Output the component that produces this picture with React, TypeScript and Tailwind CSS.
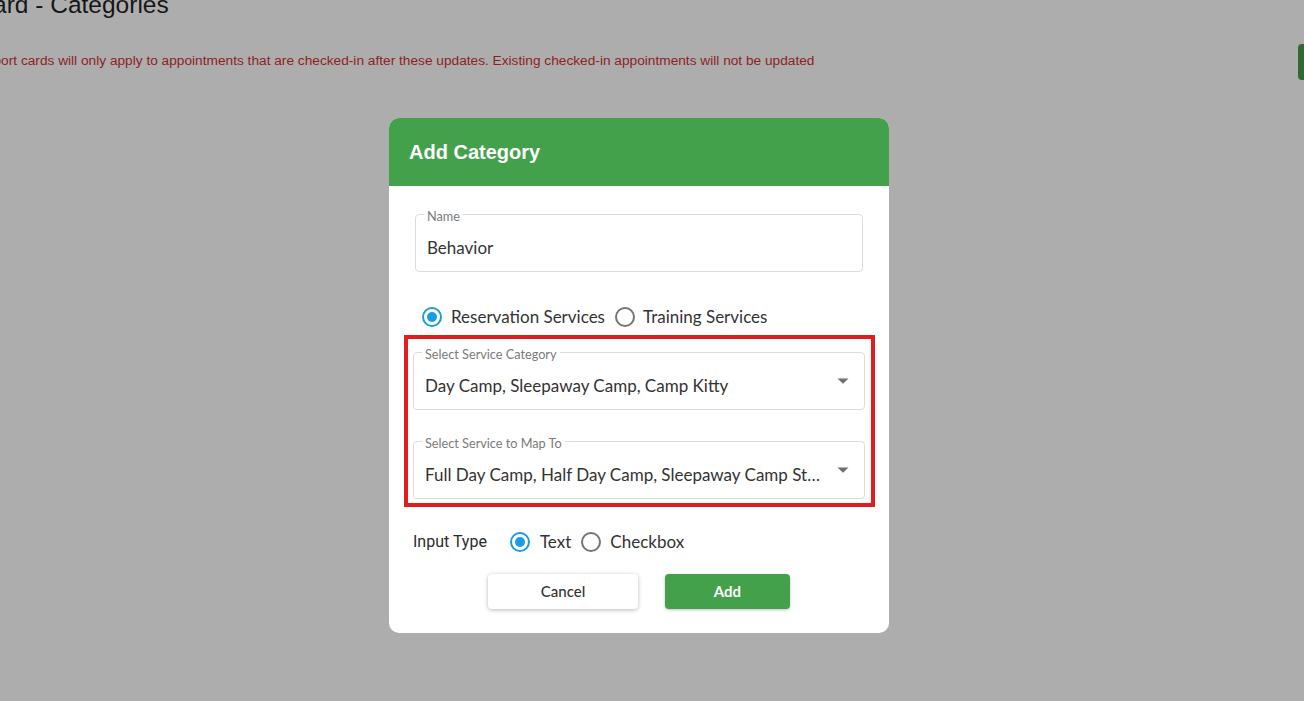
import React from "react";

const mul = { fontFamily: "Lato, 'Noto Sans', sans-serif" } as React.CSSProperties;

function Radio({ checked }: { checked: boolean }) {
  return (
    <svg width="20" height="20" viewBox="0 0 20 20" className="shrink-0">
      <circle cx="10" cy="10" r="9" fill="none" stroke={checked ? "#1a9be6" : "#757575"} strokeWidth="2" />
      {checked && <circle cx="10" cy="10" r="5" fill="#1a9be6" />}
    </svg>
  );
}

function Field({ label, value, select }: { label: string; value: string; select?: boolean }) {
  return (
    <div className="relative h-[58px] rounded-[4px] border border-[#dcdcdc] flex items-center pl-[11px] pr-[15px]">
      <span className="absolute left-[8px] -top-[7px] bg-white px-[3px] text-[12.7px] leading-[16px] text-[#7a7a7a]">
        {label}
      </span>
      <span className="flex-1 truncate text-[17px] leading-[22px] text-[#333] mt-[10px]">{value}</span>
      {select && (
        <svg width="12" height="6" viewBox="0 0 12 6" className="ml-[14px] shrink-0">
          <path d="M0.5 0.5 L11.5 0.5 L6 5.8 Z" fill="#6f6f6f" />
        </svg>
      )}
    </div>
  );
}

export default function App() {
  return (
    <div className="relative w-[1304px] h-[701px] overflow-hidden bg-[#adadad]" style={{ fontFamily: "'Liberation Sans', Arial, sans-serif" }}>
      {/* background page */}
      <div className="-mt-[10px] -ml-[105px] text-[24.5px] leading-[30px] text-[#161616] whitespace-nowrap">
        Report Card - Categories
      </div>
      <div className="mt-[33px] -ml-[24px] text-[13.7px] leading-[16px] text-[#8e1f1f] whitespace-nowrap">
        Report cards will only apply to appointments that are checked-in after these updates. Existing checked-in appointments will not be updated
      </div>
      <div className="absolute left-[1298px] top-[44px] w-[20px] h-[36px] rounded-[4px] bg-[#2d6b31]" />

      {/* modal */}
      <div className="absolute left-[389px] top-[118px] w-[500px] rounded-[10px] bg-white overflow-hidden" style={mul}>
        <div className="h-[68px] bg-[#43a14b] flex items-center px-[20px]">
          <span className="text-white text-[20px] font-bold" style={{ fontFamily: "'Liberation Sans', Arial, sans-serif" }}>
            Add Category
          </span>
        </div>
        <div className="pt-[28px] pb-[24px]">
          <div className="mx-[26px]">
            <Field label="Name" value="Behavior" />
          </div>
          <div className="mt-[33px] ml-[33px] h-[24px] flex items-center text-[17px] text-[#333]">
            <Radio checked />
            <span className="ml-[9px]">Reservation Services</span>
            <span className="ml-[10px]"><Radio checked={false} /></span>
            <span className="ml-[8px]">Training Services</span>
          </div>
          <div className="mt-[6px] ml-[15px] w-[471px] border-[4px] border-[#e21c1f] pt-[13px] pb-[4px] pl-[5px] pr-[6px] flex flex-col gap-[31px]">
            <Field label="Select Service Category" value="Day Camp, Sleepaway Camp, Camp Kitty" select />
            <Field label="Select Service to Map To" value="Full Day Camp, Half Day Camp, Sleepaway Camp Stay, Camp Kitty Stay" select />
          </div>
          <div className="mt-[23px] ml-[24px] h-[24px] flex items-center text-[17px] text-[#333]">
            <span className="text-[16px] text-[#2b2b2b]" style={{ fontFamily: "Roboto, sans-serif" }}>Input Type</span>
            <span className="ml-[23px]"><Radio checked /></span>
            <span className="ml-[10px]">Text</span>
            <span className="ml-[10px]"><Radio checked={false} /></span>
            <span className="ml-[9px]">Checkbox</span>
          </div>
          <div className="mt-[20px] flex justify-center gap-[27px]">
            <button className="w-[150px] h-[35px] rounded-[4px] bg-white text-[15px] font-medium text-[#333] shadow-[0_1px_4px_rgba(0,0,0,0.28)]">
              Cancel
            </button>
            <button className="w-[125px] h-[35px] rounded-[4px] bg-[#43a14b] text-[15px] font-bold text-white shadow-[0_1px_3px_rgba(0,0,0,0.25)]">
              Add
            </button>
          </div>
        </div>
      </div>
    </div>
  );
}
